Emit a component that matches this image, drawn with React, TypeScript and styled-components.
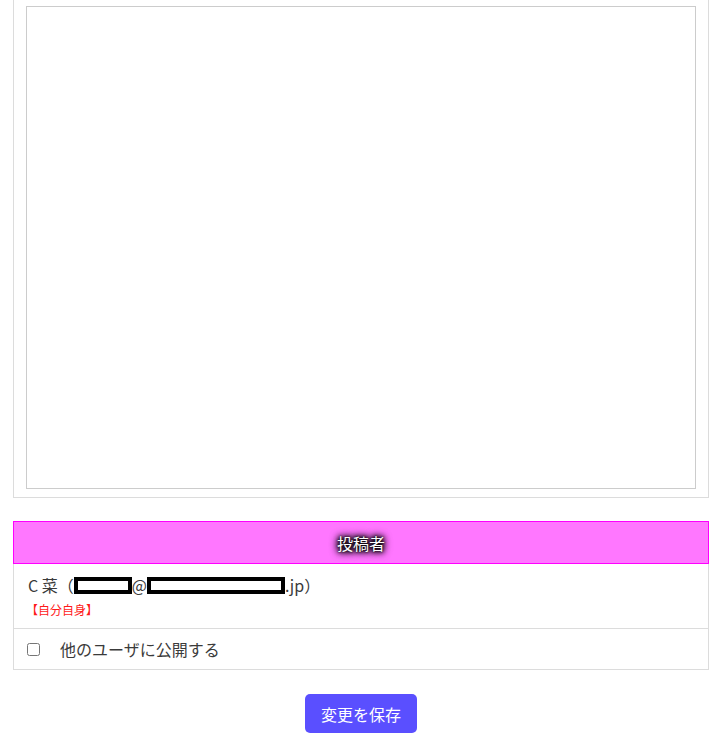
import React, { useState } from "react";
import styled, { createGlobalStyle } from "styled-components";

const GlobalStyle = createGlobalStyle`
  html, body {
    margin: 0;
    padding: 0;
    background: #fff;
  }
  body {
    font-family: "Noto Sans CJK JP", "Noto Sans", sans-serif;
    color: #333;
  }
`;

const Page = styled.div`
  padding: 0 13px 19px;
  display: flex;
  flex-direction: column;
`;

const EditorPanel = styled.div`
  border: 1px solid #dcdcdc;
  border-top: none;
  padding: 6px 12px 8px;
`;

const EditorArea = styled.div`
  height: 481px;
  border: 1px solid #cccccc;
  background: #fff;
`;

const InfoTable = styled.div`
  margin-top: 23px;
  border: 1px solid #dcdcdc;
  display: flex;
  flex-direction: column;
`;

const HeaderRow = styled.div`
  height: 41px;
  margin: -1px -1px 0;
  background: #ff77ff;
  border: 1px solid #ff00ff;
  display: flex;
  align-items: center;
  justify-content: center;
  font-size: 16px;
  color: #fff;
  text-shadow: 0 0 2px #000, 0 0 4px #000, 0 0 6px #000, 0 0 8px #000,
    0 0 10px #000;
`;

const Row = styled.div<{ $last?: boolean }>`
  padding: ${(p) => (p.$last ? "9px 12px 9px" : "10px 14px 10px")};
  border-top: ${(p) => (p.$last ? "1px solid #dcdcdc" : "none")};
  display: flex;
  flex-direction: ${(p) => (p.$last ? "row" : "column")};
  align-items: ${(p) => (p.$last ? "center" : "flex-start")};
  font-size: 16px;
  line-height: 22px;
`;

const PosterLine = styled.div`
  display: flex;
  align-items: center;
  color: #3a3a3a;
`;

const Redacted = styled.span<{ $w: number }>`
  display: inline-block;
  box-sizing: border-box;
  width: ${(p) => p.$w}px;
  height: 17px;
  border: 4px solid #000;
  background: #fff;
`;

const SelfTag = styled.div`
  color: #ff1a1a;
  font-size: 12px;
  line-height: 16px;
  margin-top: 6px;
  margin-left: -2px;
`;

const Check = styled.input`
  width: 13px;
  height: 13px;
  margin: 0 20px 0 1px;
`;

const CheckLabel = styled.label`
  color: #3a3a3a;
  display: flex;
  align-items: center;
`;

const Actions = styled.div`
  margin-top: 24px;
  display: flex;
  justify-content: center;
`;

const SaveButton = styled.button`
  height: 39px;
  padding: 0 16px;
  border: none;
  border-radius: 5px;
  background: #5a4fff;
  color: #fff;
  font-family: "Noto Sans CJK JP", "Noto Sans", sans-serif;
  font-size: 16px;
  cursor: pointer;
`;

export default function App() {
  const [shared, setShared] = useState(false);
  return (
    <>
      <GlobalStyle />
      <Page>
        <EditorPanel>
          <EditorArea />
        </EditorPanel>
        <InfoTable>
          <HeaderRow>投稿者</HeaderRow>
          <Row>
            <PosterLine>
              C 菜（<Redacted $w={58} />@<Redacted $w={138} />.jp）
            </PosterLine>
            <SelfTag>【自分自身】</SelfTag>
          </Row>
          <Row $last>
            <CheckLabel>
              <Check
                type="checkbox"
                checked={shared}
                onChange={(e) => setShared(e.target.checked)}
              />
              他のユーザに公開する
            </CheckLabel>
          </Row>
        </InfoTable>
        <Actions>
          <SaveButton>変更を保存</SaveButton>
        </Actions>
      </Page>
    </>
  );
}
